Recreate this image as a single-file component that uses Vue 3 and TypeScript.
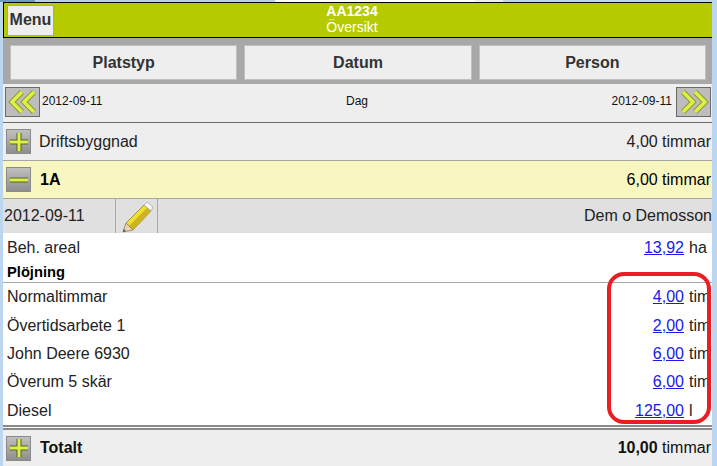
<template>
  <div class="page">
    <div class="top-strip">
      <span class="strip-a"></span>
      <span class="strip-b"></span>
      <span class="strip-c"></span>
      <span class="strip-d"></span>
      <span class="strip-e"></span>
    </div>

    <div class="main">
      <header class="header">
        <button class="menu-button">Menu</button>
        <div class="header-title">
          <strong>AA1234</strong>
          <span>Översikt</span>
        </div>
      </header>

      <nav class="tabs">
        <button v-for="tab in tabs" :key="tab" class="tab">{{ tab }}</button>
      </nav>

      <div class="date-row">
        <button class="arrow-button">
          <svg width="32" height="28" viewBox="0 0 32 28">
            <path class="chevron" d="M15 4 L5 14 L15 24" />
            <path class="chevron" d="M27 4 L17 14 L27 24" />
            <path class="chevron-fill" d="M15 4 L5 14 L15 24" />
            <path class="chevron-fill" d="M27 4 L17 14 L27 24" />
          </svg>
        </button>
        <span class="date-label">2012-09-11</span>
        <span class="date-mode">Dag</span>
        <span class="date-label">2012-09-11</span>
        <button class="arrow-button">
          <svg width="32" height="28" viewBox="0 0 32 28">
            <path class="chevron" d="M5 4 L15 14 L5 24" />
            <path class="chevron" d="M17 4 L27 14 L17 24" />
            <path class="chevron-fill" d="M5 4 L15 14 L5 24" />
            <path class="chevron-fill" d="M17 4 L27 14 L17 24" />
          </svg>
        </button>
      </div>

      <div class="group-row">
        <span class="toggle">
          <svg width="22" height="22" viewBox="0 0 22 22">
            <path class="sign-outline" d="M11 2 V20 M2 11 H20" />
            <path class="sign-fill" d="M11 2 V20 M2 11 H20" />
          </svg>
        </span>
        <span class="group-name">Driftsbyggnad</span>
        <span class="group-value">4,00 timmar</span>
      </div>

      <div class="group-row open">
        <span class="toggle">
          <svg width="22" height="22" viewBox="0 0 22 22">
            <path class="sign-outline" d="M2 11 H20" />
            <path class="sign-fill" d="M2 11 H20" />
          </svg>
        </span>
        <strong class="group-name">1A</strong>
        <span class="group-value">6,00 timmar</span>
      </div>

      <div class="entry-head">
        <span class="entry-date">2012-09-11</span>
        <span class="entry-edit">
          <svg width="34" height="33" viewBox="0 0 34 33">
            <path d="M6 23 L24 5 L31 11 L13 30 Z" fill="#f2de2e" stroke="#85804a" stroke-width="0.8" />
            <path d="M9 26 L27 8 L31 11 L13 30 Z" fill="#cdb421" />
            <path d="M24 5 L27 2 L33 7 L31 11 Z" fill="#f6f6f6" stroke="#a8a8a8" stroke-width="0.8" />
            <path d="M6 23 L13 30 L3 32 Z" fill="#edd3b0" stroke="#8f7a66" stroke-width="0.8" />
            <path d="M3.6 29 L6 31 L3 32 Z" fill="#555555" />
          </svg>
        </span>
        <span class="entry-person">Dem o Demosson</span>
      </div>

      <section class="details">
        <div class="detail-row area">
          <span>Beh. areal</span>
          <span class="amount"><a href="#">13,92</a><span class="unit">ha</span></span>
        </div>
        <div class="section-title">Plöjning</div>
        <div v-for="row in rows" :key="row.label" class="detail-row">
          <span>{{ row.label }}</span>
          <span class="amount"><a href="#">{{ row.value }}</a><span class="unit">{{ row.unit }}</span></span>
        </div>
        <div class="highlight"></div>
      </section>

      <div class="group-row total">
        <span class="toggle">
          <svg width="22" height="22" viewBox="0 0 22 22">
            <path class="sign-outline" d="M11 2 V20 M2 11 H20" />
            <path class="sign-fill" d="M11 2 V20 M2 11 H20" />
          </svg>
        </span>
        <strong class="group-name">Totalt</strong>
        <span class="group-value"><strong>10,00</strong> timmar</span>
      </div>
    </div>
  </div>
</template>

<script setup lang="ts">
interface Row {
  label: string
  value: string
  unit: string
}

const tabs: string[] = ['Platstyp', 'Datum', 'Person']

const rows: Row[] = [
  { label: 'Normaltimmar', value: '4,00', unit: 'tim' },
  { label: 'Övertidsarbete 1', value: '2,00', unit: 'tim' },
  { label: 'John Deere 6930', value: '6,00', unit: 'tim' },
  { label: 'Överum 5 skär', value: '6,00', unit: 'tim' },
  { label: 'Diesel', value: '125,00', unit: 'l' }
]
</script>

<style>
html,
body {
  margin: 0;
  background: #bcd6f0;
}
</style>

<style scoped>
.page {
  height: 466px;
  width: 717px;
  overflow: hidden;
  font-family: "Liberation Sans", Arial, sans-serif;
  color: #1a1a1a;
  background: #bcd6f0;
}

.top-strip {
  display: flex;
  height: 2px;
}

.strip-a {
  width: 35px;
  background: #6f9bc4;
}

.strip-b {
  width: 240px;
  background: #b9cfe6;
}

.strip-c {
  width: 200px;
  background: #ffffff;
}

.strip-d {
  width: 28px;
  background: #eeeeee;
}

.strip-e {
  flex: 1;
}

.main {
  margin-left: 3px;
  width: 709px;
  height: 464px;
  overflow: hidden;
  display: flex;
  flex-direction: column;
  background: #eeeeee;
}

.header {
  position: relative;
  box-sizing: border-box;
  height: 36px;
  flex: none;
  display: flex;
  align-items: center;
  padding-left: 3px;
  background: #b5cb00;
  border: 1px solid #000000;
  border-right: 0;
}

.menu-button {
  width: 47px;
  height: 31px;
  padding: 0;
  box-sizing: border-box;
  background: #eeeeee;
  border: 1px solid #a5a5a5;
  font: bold 16px "Liberation Sans", Arial, sans-serif;
  color: #333333;
}

.header-title {
  position: absolute;
  left: 0;
  right: 12px;
  top: 0;
  display: flex;
  flex-direction: column;
  align-items: center;
  color: #ffffff;
  font-size: 14px;
  line-height: 16px;
  pointer-events: none;
}

.tabs {
  flex: none;
  box-sizing: border-box;
  height: 46px;
  display: flex;
  gap: 7px;
  padding: 7px 6px 4px 7px;
  background: #a8a8a8;
}

.tab {
  flex: 1;
  padding: 0;
  box-sizing: border-box;
  background: #eeeeee;
  border: 1px solid #c0c0c0;
  font: bold 16px "Liberation Sans", Arial, sans-serif;
  color: #333333;
}

.date-row {
  flex: none;
  box-sizing: border-box;
  height: 39px;
  display: flex;
  align-items: flex-start;
  padding: 3px 1px 0 2px;
  border-bottom: 1px solid #6e6e6e;
  font-size: 12px;
}

.date-label {
  margin: 0 4px 0 2px;
  line-height: 28px;
  color: #111111;
}

.date-mode {
  flex: 1;
  text-align: center;
  line-height: 28px;
  color: #111111;
  padding-right: 2px;
}

.arrow-button {
  width: 35px;
  height: 30px;
  padding: 0;
  display: flex;
  align-items: center;
  justify-content: center;
  box-sizing: border-box;
  background: #bdbdbd;
  border: 1px solid #6a6a6a;
}

.chevron,
.chevron-fill {
  fill: none;
  stroke-linejoin: miter;
  stroke-linecap: butt;
}

.chevron {
  stroke: #8c9636;
  stroke-width: 5.5;
}

.chevron-fill {
  stroke: #dcf046;
  stroke-width: 3.5;
}

.group-row {
  flex: none;
  box-sizing: border-box;
  height: 38px;
  display: flex;
  align-items: center;
  padding: 0 1px 0 3px;
  border-bottom: 1px solid #a5a5a5;
  font-size: 16px;
  color: #222222;
}

.group-row.open {
  background: #f9f7c0;
  color: #000000;
}

.group-row.total {
  height: 36px;
  border-bottom: 0;
  color: #111111;
}

.toggle {
  width: 25px;
  height: 25px;
  flex: none;
  display: flex;
  align-items: center;
  justify-content: center;
  box-sizing: border-box;
  background: linear-gradient(#c0c0c0, #8e8e8e);
  border: 1px solid #8a8a8a;
}

.sign-outline,
.sign-fill {
  fill: none;
}

.sign-outline {
  stroke: #5c6222;
  stroke-width: 5;
}

.sign-fill {
  stroke: #dcf046;
  stroke-width: 3;
}

.group-name {
  flex: 1;
  margin-left: 8px;
}

strong.group-name {
  margin-left: 9px;
}

.entry-head {
  flex: none;
  box-sizing: border-box;
  height: 34px;
  display: flex;
  align-items: stretch;
  background: #e0e0e0;
  font-size: 16px;
  line-height: 33px;
  color: #222222;
}

.entry-date {
  width: 112px;
  padding-left: 1px;
  box-sizing: border-box;
  white-space: nowrap;
}

.entry-edit {
  width: 43px;
  box-sizing: border-box;
  display: flex;
  align-items: center;
  justify-content: center;
  border-left: 1px solid #a8a8a8;
  border-right: 1px solid #a8a8a8;
}

.entry-person {
  flex: 1;
  text-align: right;
}

.details {
  position: relative;
  flex: none;
  height: 197px;
  box-sizing: border-box;
  background: #ffffff;
  border-bottom: 5px double #8a8a8a;
}

.detail-row {
  box-sizing: border-box;
  height: 28.4px;
  display: flex;
  justify-content: space-between;
  align-items: center;
  padding-left: 4px;
  font-size: 16px;
  color: #222222;
  white-space: nowrap;
}

.detail-row.area {
  height: 30px;
}

.section-title {
  box-sizing: border-box;
  height: 20px;
  padding-left: 4px;
  font-size: 14.7px;
  font-weight: bold;
  line-height: 18px;
  color: #000000;
  border-bottom: 1px solid #a8a8a8;
}

.amount {
  width: 100px;
  display: flex;
  justify-content: flex-end;
  overflow: hidden;
  margin-right: 1px;
}

.amount a {
  color: #1a1ae6;
}

.unit {
  width: 22px;
  margin-left: 5px;
  flex: none;
  overflow: hidden;
}

.highlight {
  position: absolute;
  left: 604px;
  top: 39px;
  width: 104px;
  height: 152px;
  box-sizing: border-box;
  border: 4px solid #ed1c24;
  border-radius: 17px;
  pointer-events: none;
}
</style>
